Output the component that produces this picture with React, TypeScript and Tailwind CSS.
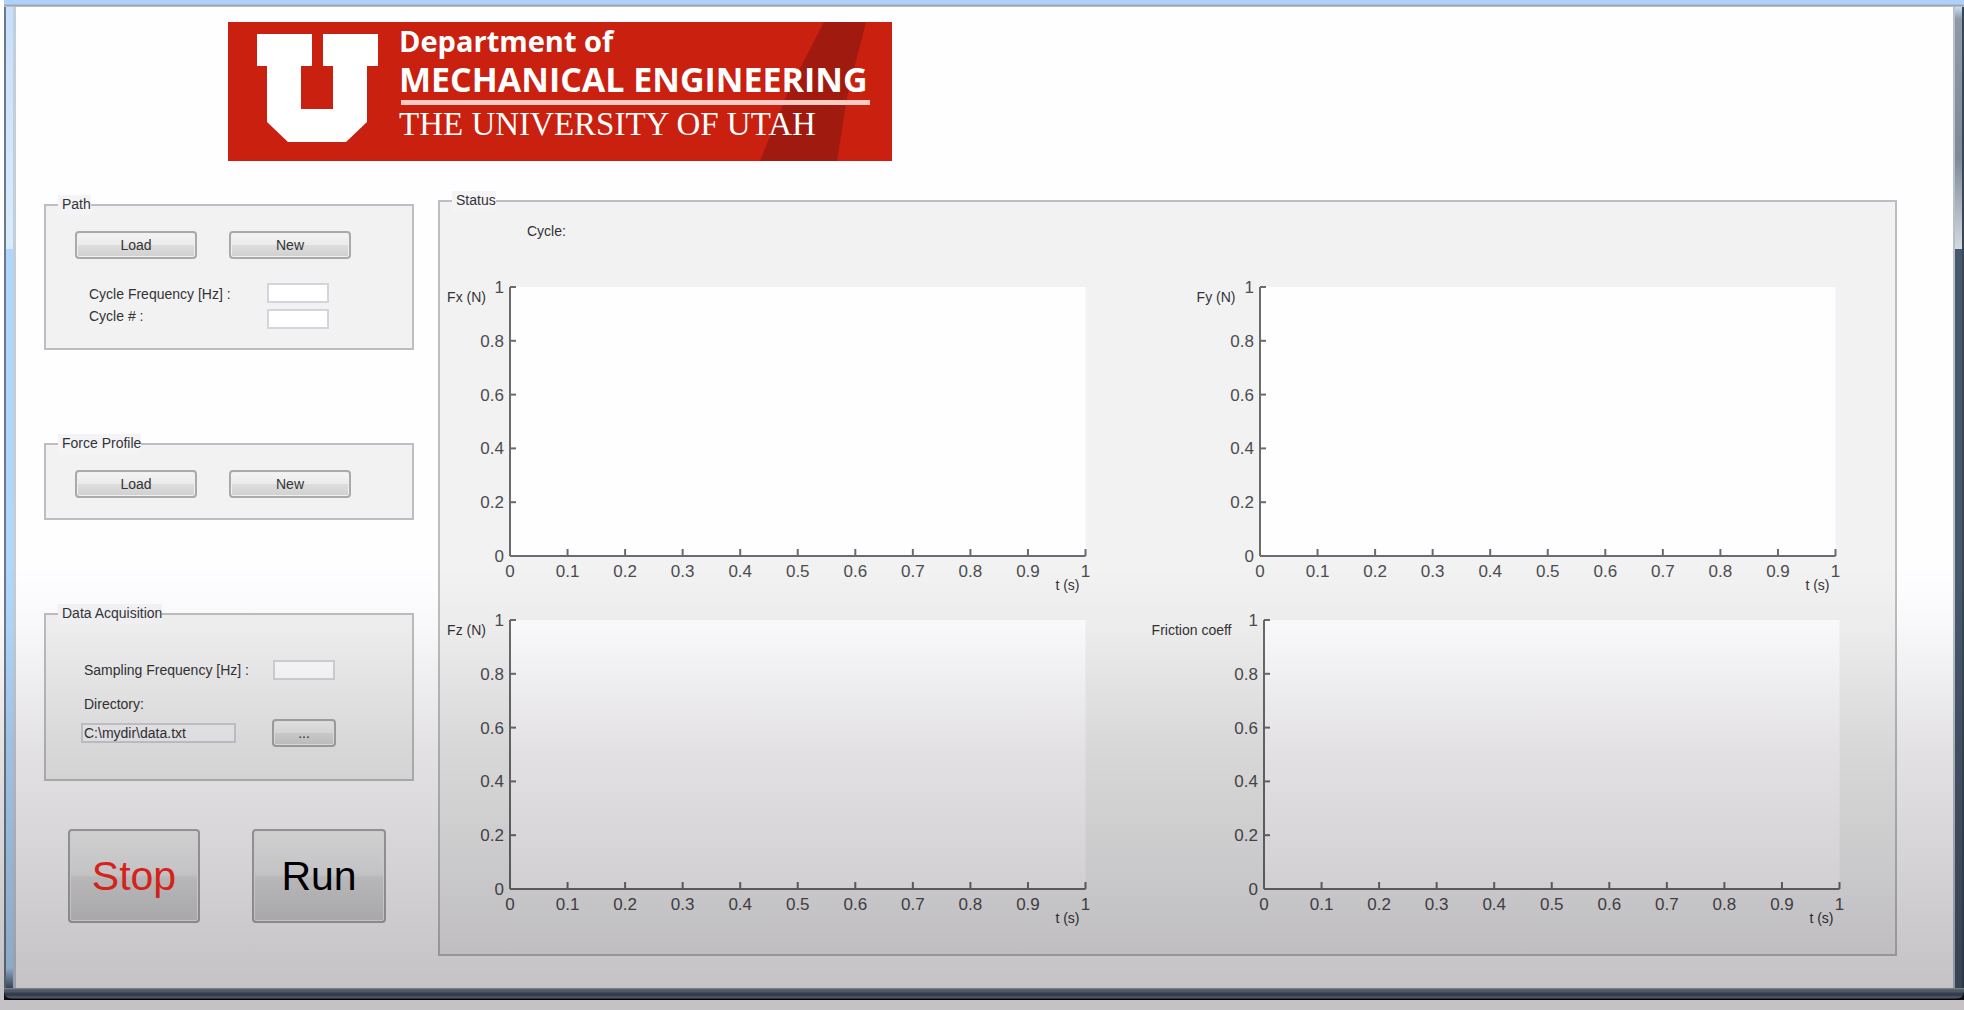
import { useState } from 'react'
import type { ReactNode } from 'react'
import clsx from 'clsx'

const X_TICKS = [0, 0.1, 0.2, 0.3, 0.4, 0.5, 0.6, 0.7, 0.8, 0.9, 1]
const Y_TICKS = [0, 0.2, 0.4, 0.6, 0.8, 1]

function Banner() {
  return (
    <svg
      viewBox="0 0 664 139"
      className="block h-[139px] w-[664px] max-w-full"
      role="img"
      aria-label="Department of Mechanical Engineering, The University of Utah"
    >
      <rect width="664" height="139" fill="#c92010" />
      <polygon points="596,0 638,0 620,70 609,139 532,139 560,70" fill="#a01a0f" />
      <path
        d="M29 12H84V44H73V87H105V44H95V12H150V44H139V100L118 120H60L39 100V44H29Z"
        fill="#fff"
      />
      <text x="171" y="30" fill="#fff" className="font-['Open_Sans'] text-[29px] font-bold">
        Department of
      </text>
      <text x="171" y="70" fill="#fff" className="font-['Open_Sans'] text-[34px] font-bold">
        MECHANICAL ENGINEERING
      </text>
      <rect x="173" y="78" width="469" height="5" fill="#fbc9c3" />
      <text x="171" y="113" fill="#fff" className="font-['Liberation_Serif'] text-[33px]">
        THE UNIVERSITY OF UTAH
      </text>
    </svg>
  )
}

function Panel({ title, className, children }: { title: string; className?: string; children: ReactNode }) {
  return (
    <fieldset className={clsx('min-w-0 border-2 border-[#bdbfbf] bg-[#f2f2f2]', className)}>
      <legend className="ml-3 bg-[#f4f4f6] pb-0.5 pl-1 leading-[18px]">{title}</legend>
      {children}
    </fieldset>
  )
}

function PushButton({ className, children, label }: { className?: string; children: ReactNode; label?: string }) {
  return (
    <button
      type="button"
      aria-label={label}
      className={clsx(
        'rounded-[4px] border-2 border-[#a9aaab] bg-[linear-gradient(#f4f4f4,#ebebeb_48%,#dddddd_52%,#d0d0d0)] shadow-[inset_0_0_0_1px_#f0f0f0]',
        className
      )}
    >
      {children}
    </button>
  )
}

function LoadNew() {
  return (
    <div className="flex gap-8 pl-[29px]">
      <PushButton className="h-7 w-[122px]">Load</PushButton>
      <PushButton className="h-7 w-[122px]">New</PushButton>
    </div>
  )
}

const field = 'h-5 w-[62px] border-2 border-[#d4d4dc] bg-white px-1 outline-none'

function Plot({ label, labelPad = 'pr-6' }: { label: string; labelPad?: string }) {
  return (
    <div className="flex">
      <div className={clsx('flex w-[70px] shrink-0 justify-end', labelPad)}>
        <span className="whitespace-nowrap leading-5">{label}</span>
      </div>
      <svg className="h-[269px] min-w-0 flex-1 overflow-visible" role="img" aria-label={`${label} against t (s)`}>
        <rect width="100%" height="100%" fill="#fefdff" />
        <g stroke="#6b6b6b" strokeWidth="2">
          <line x1="0" y1="0" x2="0" y2="100%" />
          <line x1="0" y1="100%" x2="100%" y2="100%" />
          {Y_TICKS.map((t) => (
            <line key={t} x1="0" x2="6" y1={`${100 - t * 100}%`} y2={`${100 - t * 100}%`} />
          ))}
        </g>
        {X_TICKS.map((t) => (
          <svg key={t} x={`${t * 100}%`} y="100%" className="overflow-visible">
            <line x1="0" x2="0" y1="-7" y2="0" stroke="#6b6b6b" strokeWidth="2" />
            <text y="21" textAnchor="middle" fill="#4c4c50" className="text-[17px]">
              {t}
            </text>
          </svg>
        ))}
        {Y_TICKS.map((t) => (
          <svg key={t} y={`${100 - t * 100}%`} className="overflow-visible">
            <text x="-6" y="6" textAnchor="end" fill="#4c4c50" className="text-[17px]">
              {t}
            </text>
          </svg>
        ))}
        <svg x="100%" y="100%" className="overflow-visible">
          <text x="-6" y="34" textAnchor="end" fill="#333336">
            t (s)
          </text>
        </svg>
      </svg>
    </div>
  )
}

export default function App() {
  const [cycleFrequency, setCycleFrequency] = useState('')
  const [cycleCount, setCycleCount] = useState('')
  const [samplingFrequency, setSamplingFrequency] = useState('')
  const [directory, setDirectory] = useState('C:\\mydir\\data.txt')

  return (
    <div className="relative flex min-h-screen flex-col bg-[#fefdff] pb-[10px] pl-1 font-['Liberation_Sans',Arial,sans-serif] text-sm text-[#333336]">
      <div className="h-1 bg-[#add1fb]" />
      <div className="h-[3px] bg-[linear-gradient(#bccbe0,#9ea3b3,#c9c9d2)]" />

      <div className="flex flex-1">
        <div className="w-3 shrink-0 border-r-[3px] border-l-2 border-r-[#c3ced9] border-l-[#6f7985] bg-[linear-gradient(#c6e0fb,#d9ecfd_242px,#aed6fe_242px,#b3dafe_calc(100%-20px),#45586b)]" />

        <div className="min-w-0 flex-1 pt-[15px]">
          <header className="pl-[212px]">
            <Banner />
          </header>

          <main className="flex gap-6 pt-[30px] pr-14 pb-[30px] pl-7">
            <div className="w-[370px] shrink-0 pt-1">
              <Panel title="Path" className="pb-[19px]">
                <div className="pt-4">
                  <LoadNew />
                </div>
                <div className="flex pt-6 pl-[43px]">
                  <div className="flex w-[178px] flex-col leading-[22px]">
                    <label htmlFor="cycle-frequency">Cycle Frequency [Hz] :</label>
                    <label htmlFor="cycle-count">Cycle # :</label>
                  </div>
                  <div className="flex flex-col gap-[6px]">
                    <input
                      id="cycle-frequency"
                      type="text"
                      value={cycleFrequency}
                      onChange={(e) => setCycleFrequency(e.target.value)}
                      className={field}
                    />
                    <input
                      id="cycle-count"
                      type="text"
                      value={cycleCount}
                      onChange={(e) => setCycleCount(e.target.value)}
                      className={field}
                    />
                  </div>
                </div>
              </Panel>

              <Panel title="Force Profile" className="mt-[84px] pb-5">
                <div className="pt-4">
                  <LoadNew />
                </div>
              </Panel>

              <Panel title="Data Acquisition" className="mt-[84px] pb-8">
                <div className="flex pt-9 pl-[38px]">
                  <label htmlFor="sampling-frequency" className="w-[189px] leading-5">
                    Sampling Frequency [Hz] :
                  </label>
                  <input
                    id="sampling-frequency"
                    type="text"
                    value={samplingFrequency}
                    onChange={(e) => setSamplingFrequency(e.target.value)}
                    className={field}
                  />
                </div>
                <label htmlFor="directory" className="mt-[14px] block pl-[38px] leading-5">
                  Directory:
                </label>
                <div className="mt-[5px] flex items-center gap-9 pl-[35px]">
                  <input
                    id="directory"
                    type="text"
                    value={directory}
                    onChange={(e) => setDirectory(e.target.value)}
                    className="h-5 w-[155px] border-2 border-[#cfcfd6] bg-[#f6f6f8] px-px outline-none"
                  />
                  <PushButton className="h-7 w-16" label="Browse">
                    ...
                  </PushButton>
                </div>
              </Panel>

              <div className="mt-12 flex gap-[52px] pl-6 text-[41px]">
                <PushButton className="h-[94px] w-[132px] text-[#ff2a1c]">Stop</PushButton>
                <PushButton className="h-[94px] w-[134px] text-black">Run</PushButton>
              </div>
            </div>

            <Panel title="Status" className="flex-1 pb-[65px]">
              <div className="pt-[10px] pl-[87px] leading-5">Cycle:</div>
              <div className="mt-[46px] grid grid-cols-2 gap-[104px] pr-[60px]">
                <Plot label="Fx (N)" />
                <Plot label="Fy (N)" />
              </div>
              <div className="mt-16 grid grid-cols-2 gap-[108px] pr-14">
                <Plot label="Fz (N)" />
                <Plot label="Friction coeff" labelPad="pr-8" />
              </div>
            </Panel>
          </main>
        </div>

        <div className="w-[11px] shrink-0 border-r-2 border-l-2 border-r-[#3a4654] border-l-[#b9c0c9] bg-[linear-gradient(#c3defa,#8d99a5_12px,#7d8997_150px,#d3dae1_242px,#46586b_242px)]" />
      </div>

      <div className="bg-[#151515]">
        <div className="h-3 rounded-b-lg border-b border-black bg-[linear-gradient(#aaaeb3,#66727f_2px,#66727f_4px,#3c4f63_5px,#3c4f63_8px,#7c838b_9px,#2a2a2c)]" />
      </div>

      {/* shade falling towards the bottom of the screen */}
      <div className="pointer-events-none absolute inset-0 bg-[linear-gradient(rgba(8,0,10,0)_56%,rgba(8,0,10,0.025)_62%,rgba(8,0,10,0.11)_74%,rgba(8,0,10,0.165)_85%,rgba(8,0,10,0.22)_95%,rgba(8,0,10,0.235))]" />
    </div>
  )
}
